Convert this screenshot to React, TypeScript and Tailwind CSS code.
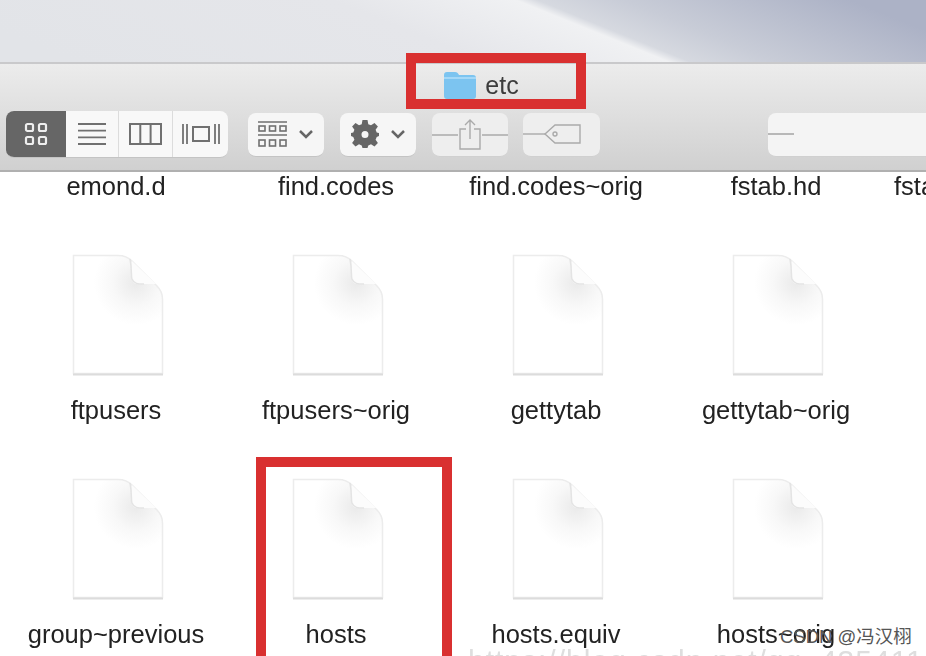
const rows = [
  ['ftpusers', 'ftpusers~orig', 'gettytab', 'gettytab~orig'],
  ['group~previous', 'hosts', 'hosts.equiv', 'hosts~orig'],
]

const FileIcon = () => (
  <svg width="96" height="126" viewBox="0 0 96 126" fill="none" className="ml-[4px]">
    <defs>
      <radialGradient id="fold" gradientUnits="userSpaceOnUse" cx="66" cy="30" r="42">
        <stop offset="0" stopColor="#eaeaea" />
        <stop offset="0.55" stopColor="#f8f8f8" />
        <stop offset="1" stopColor="#ffffff" />
      </radialGradient>
    </defs>
    <path d="M3.500 2.500H48C54 2.500 58 4 62 8L87 33C91 37 92.500 41 92.500 46V120.500H3.500Z" fill="url(#fold)" stroke="#ececec" strokeWidth="1.500" />
    <path d="M3 121.500H93" stroke="#dcdcdc" strokeWidth="2" />
    <path d="M62 8L86 31H68C64 31 62 29 62 25Z" fill="#fcfcfc" />
    <path d="M60 6C62 16 61 24 62 26C64 31 68 31 74 31" stroke="#e4e4e4" strokeWidth="1.500" />
  </svg>
)

const Chevron = () => (
  <svg width="16" height="10" viewBox="0 0 16 10" fill="none" stroke="#666" strokeWidth="2.500">
    <path d="M2 2L8 8L14 2" />
  </svg>
)

export default function App() {
  return (
    <div className="relative h-[656px] w-[926px] overflow-hidden bg-white font-['Liberation_Sans',sans-serif]">
      {/* desktop behind the window */}
      <div className="h-[62px] bg-[linear-gradient(22deg,#e2e4e8_7%,#e5e6ea_45%,#f0f1f3_62%,#d6d9e0_64%,#c8ccd7_72%,#acb2c6_93%)]"></div>

      {/* title bar + toolbar */}
      <div className="h-[110px] border-t-2 border-b-2 border-t-[#c9c9cb] border-b-[#b0b0b0] bg-[linear-gradient(#ececec,#d0d0d0)]">
        <div className="flex h-[36px] items-end justify-center gap-[8px] pl-[36px]">
          <svg width="34" height="30" viewBox="0 0 34 30" className="blur-[0.5px]">
            <path d="M1 5C1 3 2 2 4 2H12C14 2 15 3 16 5H30C32 5 33 6 33 8V26C33 28 32 29 30 29H4C2 29 1 28 1 26Z" fill="#7cc4f0" />
            <path d="M1 8H33" stroke="#a5d8f7" strokeWidth="2" />
          </svg>
          <span className="text-[25px] leading-[30px] text-[#3c3c3c] blur-[0.4px]">etc</span>
        </div>

        <div className="mt-[11px] flex items-center pl-[6px] blur-[0.4px]">
          {/* view switcher */}
          <div className="flex h-[47px] w-[222px] shrink-0 overflow-hidden rounded-[8px] border-b border-[#c4c4c4] bg-[#f8f8f8]">
            <div className="flex w-[60px] items-center justify-center bg-[#666666]">
              <svg width="24" height="24" viewBox="0 0 24 24" fill="none" stroke="#eee" strokeWidth="2.200">
                <rect x="2" y="2" width="7" height="7" rx="1.500" />
                <rect x="15" y="2" width="7" height="7" rx="1.500" />
                <rect x="2" y="15" width="7" height="7" rx="1.500" />
                <rect x="15" y="15" width="7" height="7" rx="1.500" />
              </svg>
            </div>
            <div className="flex w-[53px] items-center justify-center border-r border-[#dcdcdc]">
              <svg width="30" height="24" viewBox="0 0 30 24" stroke="#707070" strokeWidth="1.800">
                <path d="M1 2H29M1 8.700H29M1 15.300H29M1 22H29" />
              </svg>
            </div>
            <div className="flex w-[54px] items-center justify-center border-r border-[#dcdcdc]">
              <svg width="33" height="22" viewBox="0 0 33 22" fill="none" stroke="#707070" strokeWidth="2">
                <rect x="1" y="1" width="31" height="20" />
                <path d="M11.300 1V21M21.600 1V21" />
              </svg>
            </div>
            <div className="flex w-[55px] items-center justify-center">
              <svg width="38" height="22" viewBox="0 0 38 22" fill="none" stroke="#707070" strokeWidth="1.800">
                <path d="M1 1V21M5 1V21M33 1V21M37 1V21" />
                <rect x="11" y="4" width="16" height="14" strokeWidth="2" />
              </svg>
            </div>
          </div>

          {/* arrange */}
          <div className="ml-[20px] flex h-[44px] w-[76px] shrink-0 items-center justify-center gap-[11px] rounded-[8px] border-b border-[#c4c4c4] bg-[#f6f6f6]">
            <svg width="29" height="27" viewBox="0 0 29 27" fill="none" stroke="#707070" strokeWidth="1.600">
              <path d="M0 1H29M0 14H29" />
              <rect x="1" y="5" width="6" height="5" />
              <rect x="11.500" y="5" width="6" height="5" />
              <rect x="22" y="5" width="6" height="5" />
              <rect x="1" y="19" width="6" height="6" />
              <rect x="11.500" y="19" width="6" height="6" />
              <rect x="22" y="19" width="6" height="6" />
            </svg>
            <Chevron />
          </div>

          {/* action */}
          <div className="ml-[16px] flex h-[44px] w-[76px] shrink-0 items-center justify-center gap-[11px] rounded-[8px] border-b border-[#c4c4c4] bg-[#f6f6f6]">
            <svg width="28" height="28" viewBox="0 0 28 28">
              <path
                fill="#666"
                fillRule="evenodd"
                d="M11.500 0H16.500L17.300 4.200L20 5.300L23.500 2.900L26.900 6.400L24.600 9.800L25.700 12.500L28 13V16L25.700 17L24.600 19.700L26.900 23.100L23.500 26.500L20 24.300L17.300 25.400L16.500 28H11.500L10.700 25.400L8 24.300L4.500 26.500L1.100 23.100L3.400 19.700L2.300 17L0 16V13L2.300 12.500L3.400 9.800L1.100 6.400L4.500 2.900L8 5.300L10.700 4.200ZM14 11A3.500 3.500 0 1 0 14 18A3.500 3.500 0 1 0 14 11Z"
              />
            </svg>
            <Chevron />
          </div>

          {/* share */}
          <div className="ml-[16px] flex h-[44px] w-[76px] shrink-0 items-center justify-center rounded-[8px] border-b border-[#d0d0d0] bg-[#eeeeee]">
            <svg width="76" height="32" viewBox="0 0 76 32" fill="none" stroke="#aaa" strokeWidth="1.400">
              <path d="M0 17H26M50 17H76" />
              <path d="M34 11H28V31H48V11H42M38 21V2M33 7L38 2L43 7" />
            </svg>
          </div>

          {/* tags */}
          <div className="ml-[15px] flex h-[44px] w-[77px] shrink-0 items-center justify-center rounded-[8px] border-b border-[#d0d0d0] bg-[#eeeeee]">
            <svg width="77" height="20" viewBox="0 0 77 20" fill="none" stroke="#aaa" strokeWidth="1.400">
              <path d="M0 10H22" />
              <path d="M22 10L32 1H57V19H32Z" />
              <circle cx="32" cy="10" r="2" />
            </svg>
          </div>

          {/* search */}
          <div className="ml-[168px] flex h-[44px] w-[170px] shrink-0 items-center rounded-[8px] border-b border-[#d0d0d0] bg-[#f4f4f4]">
            <div className="h-[1.500px] w-[26px] bg-[#b8b8b8]"></div>
          </div>
        </div>
      </div>

      {/* icon grid */}
      <div className="h-[484px] overflow-hidden pl-[6px] text-[25.500px] leading-[28px] text-[#222222] blur-[0.5px]">
        <div className="grid h-[28px] grid-cols-[repeat(5,220px)] text-center">
          <div>emond.d</div>
          <div>find.codes</div>
          <div>find.codes~orig</div>
          <div>fstab.hd</div>
          <div className="pl-[8px] text-left">fsta</div>
        </div>
        {rows.map((row, i) => (
          <div key={i} className="mt-[53px] grid grid-cols-[repeat(4,220px)] text-center">
            {row.map((name) => (
              <div key={name} className="flex flex-col items-center">
                <FileIcon />
                <div className="mt-[17px] whitespace-nowrap">{name}</div>
              </div>
            ))}
          </div>
        ))}
      </div>

      {/* red annotation boxes */}
      <div className="absolute left-[406px] top-[53px] h-[56px] w-[180px] border-[10px] border-[#d93030]"></div>
      <div className="absolute left-[256px] top-[457px] h-[220px] w-[196px] border-[10px] border-[#d93030]"></div>

      {/* watermarks */}
      <div className="absolute left-[468px] top-[638px] whitespace-nowrap text-[30px] tracking-[1px] text-[#dedede] blur-[0.6px]">https://blog.csdn.net/qq_43541169</div>
      <div className="absolute left-[780px] top-[624px] whitespace-nowrap font-['Liberation_Sans','Noto_Sans_CJK_SC',sans-serif] text-[18.500px] leading-[26px] text-[#555555]">CSDN @冯汉栩</div>
    </div>
  )
}
